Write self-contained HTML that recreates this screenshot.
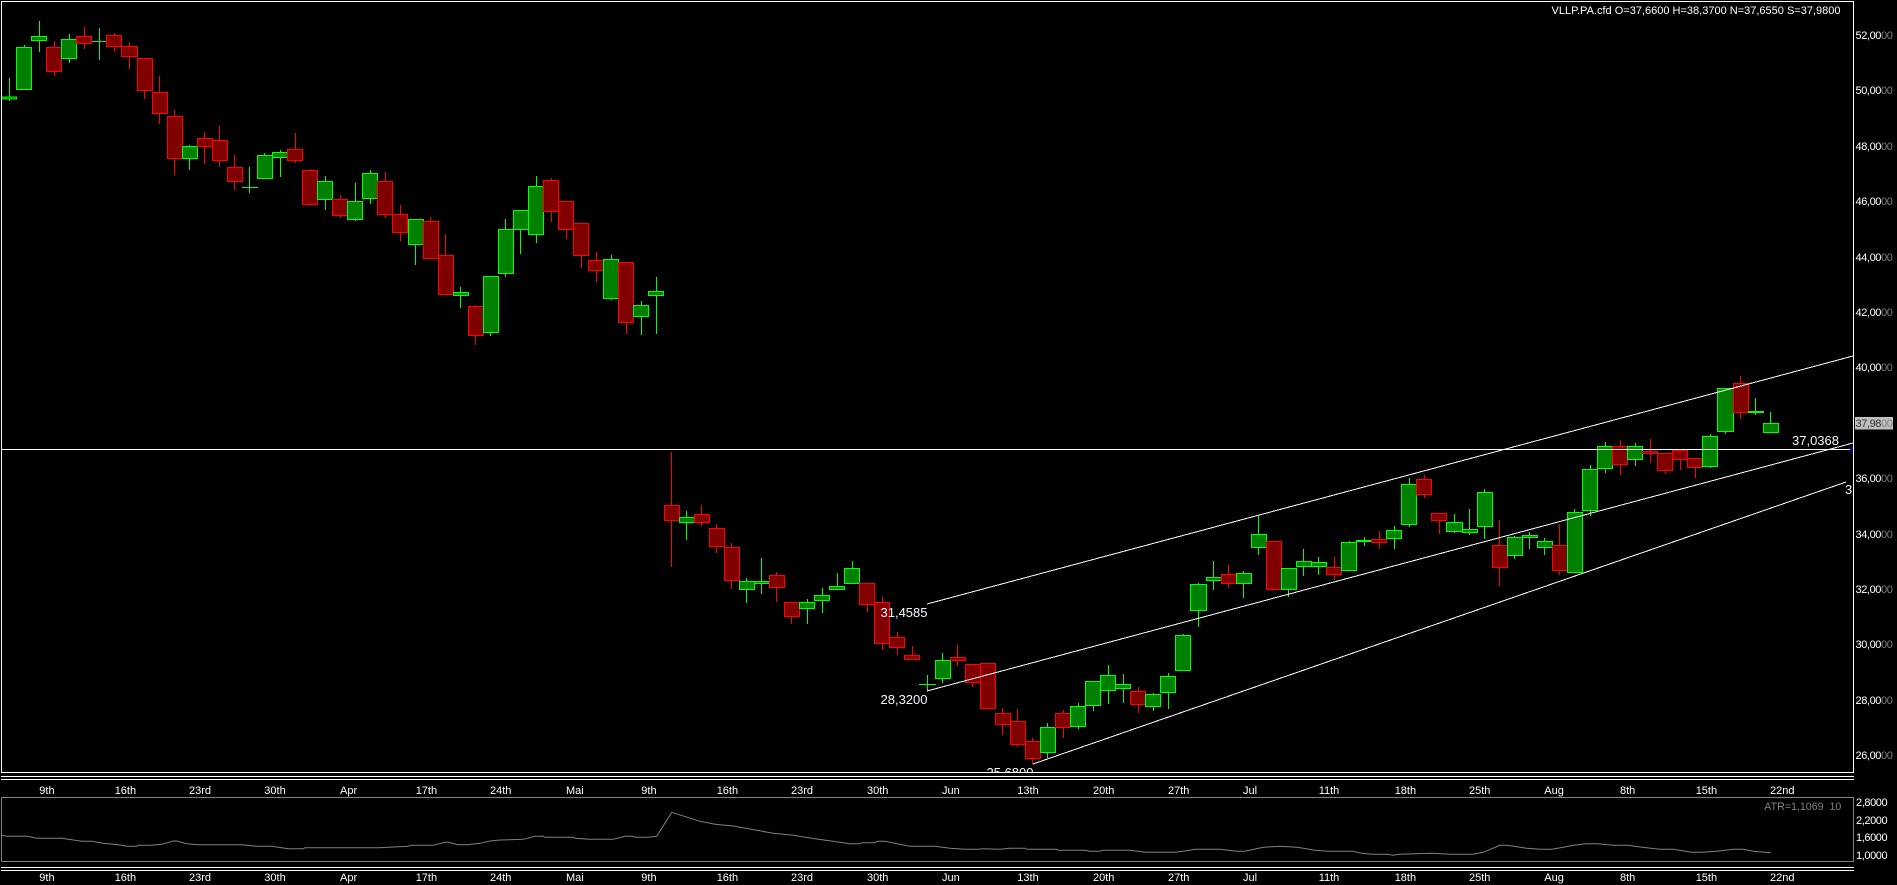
<!DOCTYPE html>
<html lang="fr"><head><meta charset="utf-8"><title>VLLP.PA.cfd</title>
<style>
html,body{margin:0;padding:0;background:#000;width:1897px;height:885px;overflow:hidden}
svg{display:block;position:absolute;left:0;top:0}
text{font-family:"Liberation Sans",sans-serif;font-size:11px;fill:#fff}
.g{fill:#008000;stroke:#0f0}
.r{fill:#800000;stroke:#f00}
.a{letter-spacing:-.4px}
.a tspan{fill:#808080}
.d{text-anchor:start}
.l{font-size:13px;fill:#f4f8ff}
</style></head><body>
<svg width="1897" height="885" viewBox="0 0 1897 885" xmlns="http://www.w3.org/2000/svg">
<defs><clipPath id="c"><rect x="2" y="2" width="1851" height="770"/></clipPath></defs>
<rect width="1897" height="885" fill="#000"/>
<g shape-rendering="crispEdges" fill="none">
<path stroke="#0f0" d="M9.5 78V101M24.5 45V89M39.5 21V52M69.5 34V63M99.5 28V60M91.5 41.5H106.5M189.5 145V170M249.5 167V193M242 187.5H258M264.5 153V178M280.5 150V177M325.5 176V210M355.5 183V221M370.5 170V204M415.5 219V265M460.5 287V308M490.5 276V336M505.5 219V277M520.5 210V254M536.5 176V243M611.5 255V300M641.5 301V335M656.5 277V334M686.5 511V540M746.5 578V603M761.5 558V594M807.5 599V624M822.5 588V613M837.5 573V590M852.5 561V584M927.5 675V691M919 684.5H936M942.5 653V683M1047.5 723V758M1078.5 703V729M1093.5 681V711M1108.5 665V704M1123.5 674V703M1153.5 693V711M1168.5 673V709M1183.5 634V671M1198.5 583V627M1213.5 561V590M1243.5 571V598M1258.5 516V555M1288.5 568V597M1303.5 549V576M1318.5 557V575M1349.5 541V571M1364.5 537V546M1394.5 526V549M1409.5 478V527M1454.5 514V533M1469.5 509V535M1484.5 489V539M1514.5 536V559M1529.5 532V549M1544.5 538V555M1574.5 509V573M1590.5 465V516M1605.5 442V473M1635.5 443V466M1710.5 434V468M1725.5 388V434M1755.5 398V415M1770.5 412V424"/>
<path stroke="#f00" d="M54.5 41V76M84.5 27V49M114.5 33V52M129.5 42V69M144.5 58V99M159.5 76V124M174.5 110V175M204.5 132V164M219.5 126V167M234.5 155V190M295.5 133V163M310.5 169V206M340.5 195V218M385.5 172V218M400.5 205V241M430.5 217V259M445.5 234V295M475.5 305V345M551.5 178V222M566.5 202V239M581.5 224V268M596.5 252V282M626.5 263V334M671.5 452V567M701.5 505V526M716.5 524V553M731.5 543V589M776.5 572V602M791.5 603V624M867.5 584V612M882.5 597V650M897.5 632V655M912.5 646V660M957.5 645V666M972.5 665V687M987.5 664V710M1002.5 708V735M1017.5 709V747M1032.5 738V764M1063.5 710V738M1138.5 687V713M1228.5 565V588M1273.5 542V591M1334.5 557V580M1379.5 531V549M1424.5 475V498M1439.5 514V534M1499.5 520V586M1559.5 524V575M1620.5 440V475M1650.5 439V463M1665.5 454V474M1680.5 451V470M1695.5 459V478M1740.5 376V419"/>
<path class="g" d="M1.5 97h15v2h-15z"/><path class="g" d="M16.5 47.500h15v42h-15z"/><path class="g" d="M31.5 36.500h15v4h-15z"/><path class="r" d="M46.500 47.500h15v24h-15z"/><path class="g" d="M61.500 39.500h15v19h-15z"/><path class="r" d="M76.500 36.500h15v7h-15z"/><path class="r" d="M106.500 35.500h15v11h-15z"/><path class="r" d="M121.500 46.500h16v10h-16z"/><path class="r" d="M137.500 58.500h15v32h-15z"/><path class="r" d="M152.500 92.500h15v21h-15z"/><path class="r" d="M167.500 116.500h15v42h-15z"/><path class="g" d="M182.500 146.500h15v12h-15z"/><path class="r" d="M197.500 138.500h15v8h-15z"/><path class="r" d="M212.500 140.500h15v20h-15z"/><path class="r" d="M227.500 167.500h15v14h-15z"/><path class="g" d="M257.500 155.500h15v23h-15z"/><path class="g" d="M272.500 152.500h15v5h-15z"/><path class="r" d="M287.500 149.500h15v11h-15z"/><path class="r" d="M302.500 170.500h15v34h-15z"/><path class="g" d="M317.500 181.500h15v18h-15z"/><path class="r" d="M332.500 199.500h15v16h-15z"/><path class="g" d="M347.500 201.500h15v18h-15z"/><path class="g" d="M362.500 173.500h15v25h-15z"/><path class="r" d="M377.500 181.500h15v33h-15z"/><path class="r" d="M392.500 214.500h15v18h-15z"/><path class="g" d="M408.500 219.500h15v25h-15z"/><path class="r" d="M423.500 221.500h15v37h-15z"/><path class="r" d="M438.500 255.500h15v39h-15z"/><path class="g" d="M453.500 292.500h15v3h-15z"/><path class="r" d="M468.500 306.500h15v29h-15z"/><path class="g" d="M483.500 276.500h15v56h-15z"/><path class="g" d="M498.500 229.500h15v44h-15z"/><path class="g" d="M513.500 210.500h15v19h-15z"/><path class="g" d="M528.500 186.500h15v48h-15z"/><path class="r" d="M543.500 180.500h15v31h-15z"/><path class="r" d="M558.500 201.500h15v28h-15z"/><path class="r" d="M573.500 223.500h15v32h-15z"/><path class="r" d="M588.500 260.500h15v10h-15z"/><path class="g" d="M603.500 259.500h15v39h-15z"/><path class="r" d="M618.500 262.500h15v60h-15z"/><path class="g" d="M633.500 305.500h15v11h-15z"/><path class="g" d="M648.500 291.500h15v4h-15z"/>
<path class="r" d="M664.500 505.500h15v15h-15z"/><path class="g" d="M679.500 517.500h15v5h-15z"/><path class="r" d="M694.500 514.500h15v8h-15z"/><path class="r" d="M709.500 528.500h15v18h-15z"/><path class="r" d="M724.500 547.500h15v33h-15z"/><path class="g" d="M739.500 581.500h15v8h-15z"/><path class="g" d="M754.500 581.500h15v2h-15z"/><path class="r" d="M769.500 575.500h15v12h-15z"/><path class="r" d="M784.500 602.500h15v14h-15z"/><path class="g" d="M799.500 602.500h15v6h-15z"/><path class="g" d="M814.500 595.500h15v5h-15z"/><path class="g" d="M829.500 586.500h15v3h-15z"/><path class="g" d="M844.500 568.500h15v15h-15z"/><path class="r" d="M859.500 583.500h15v21h-15z"/><path class="r" d="M874.500 602.500h15v41h-15z"/><path class="r" d="M889.500 637.500h15v10h-15z"/><path class="r" d="M904.500 655.500h15v4h-15z"/><path class="g" d="M935.500 660.500h15v18h-15z"/><path class="r" d="M950.500 657.500h15v3h-15z"/><path class="r" d="M965.500 664.500h15v18h-15z"/><path class="r" d="M980.500 663.500h15v45h-15z"/><path class="r" d="M995.500 713.500h15v11h-15z"/><path class="r" d="M1010.500 721.500h15v23h-15z"/><path class="r" d="M1025.500 741.500h15v17h-15z"/><path class="g" d="M1040.500 727.500h15v25h-15z"/><path class="r" d="M1055.500 713.500h15v14h-15z"/><path class="g" d="M1070.500 706.500h15v20h-15z"/><path class="g" d="M1085.500 681.500h15v24h-15z"/><path class="g" d="M1100.500 675.500h15v15h-15z"/><path class="g" d="M1115.500 684.500h15v4h-15z"/><path class="r" d="M1130.500 691.500h15v13h-15z"/><path class="g" d="M1145.500 694.500h15v12h-15z"/><path class="g" d="M1160.500 676.500h15v16h-15z"/><path class="g" d="M1175.500 635.500h15v35h-15z"/><path class="g" d="M1190.500 584.500h16v26h-16z"/><path class="g" d="M1206.500 577.500h15v3h-15z"/><path class="r" d="M1221.500 574.500h15v9h-15z"/><path class="g" d="M1236.500 573.500h15v10h-15z"/><path class="g" d="M1251.500 534.500h15v13h-15z"/><path class="r" d="M1266.500 541.500h15v48h-15z"/><path class="g" d="M1281.500 568.500h15v21h-15z"/><path class="g" d="M1296.500 561.500h15v5h-15z"/><path class="g" d="M1311.500 562.500h15v4h-15z"/><path class="r" d="M1326.500 567.500h15v7h-15z"/><path class="g" d="M1341.500 542.500h15v28h-15z"/><path class="g" d="M1356.500 540.500h15v1h-15z"/><path class="r" d="M1371.500 539.500h15v3h-15z"/><path class="g" d="M1386.500 530.500h15v8h-15z"/><path class="g" d="M1401.500 484.500h15v40h-15z"/><path class="r" d="M1416.500 479.500h15v15h-15z"/><path class="r" d="M1431.500 513.500h15v7h-15z"/><path class="g" d="M1446.500 522.500h16v9h-16z"/><path class="g" d="M1462.500 529.500h15v3h-15z"/><path class="g" d="M1477.500 492.500h15v34h-15z"/><path class="r" d="M1492.500 545.500h15v22h-15z"/><path class="g" d="M1507.500 537.500h15v18h-15z"/><path class="g" d="M1522.500 535.500h15v2h-15z"/><path class="g" d="M1537.500 541.500h15v6h-15z"/><path class="r" d="M1552.500 545.500h15v25h-15z"/><path class="g" d="M1567.500 512.500h15v60h-15z"/><path class="g" d="M1582.500 469.500h15v41h-15z"/><path class="g" d="M1597.500 446.500h15v22h-15z"/><path class="r" d="M1612.500 446.500h15v18h-15z"/><path class="g" d="M1627.500 446.500h15v13h-15z"/><path class="r" d="M1642.500 451.500h15v2h-15z"/><path class="r" d="M1657.500 453.500h15v17h-15z"/><path class="r" d="M1672.500 450.500h15v9h-15z"/><path class="r" d="M1687.500 458.500h15v9h-15z"/><path class="g" d="M1702.500 436.500h15v30h-15z"/><path class="g" d="M1717.500 388.500h16v43h-16z"/><path class="r" d="M1733.500 383.500h15v29h-15z"/><path stroke="#0f0" d="M1748 411.500H1764M1748 412.500H1764"/><path class="g" d="M1763.500 423.500h15v9h-15z"/>
<path stroke="#fff" d="M927 604L1853 356M927 691L1853 443M1033 764L1846 482M2 449.500H1853"/>
<rect x="1850" y="447" width="3" height="5" fill="#000080"/>
<rect x="1.500" y="1.500" width="1852" height="771" stroke="#fff"/>
<path stroke="#fff" d="M1 776.500H1854M1 779.500H1854M1 867.500H1854M1 870.500H1854"/>
<rect x="1.500" y="797.500" width="1852" height="64" stroke="#808080"/>
</g>
<path fill="none" stroke="#808080" stroke-width="1" d="M1.700 835.300L6.700 836.300L27.300 836.300L36.700 838.300L61.700 838.300L73.300 840L81.700 841.300L91.700 841.300L103.300 843.300L118.300 844.700L126.700 846.300L136.700 846.300L138.300 845.300L151.700 845.300L161.700 844.300L173.300 841L176.700 841L186.700 843.700L198.300 844.700L241.700 844.700L256.700 846.300L271.700 846.300L288.300 848.700L303.300 848.700L305 847.700L378.300 847.700L408.300 846.300L410 845.300L433.300 845.300L445 842.300L448.300 842.300L458.300 844.700L466.700 844.700L480 843.300L490 841L500 840L523.300 839.300L535 836.300L543.300 836.300L545 837.300L573.300 837.300L575 838.300L590 839.300L613.300 839.300L625 836.300L633.300 836.300L635 837.300L648.300 837.300L656.700 836.300L671.700 812.300L700 821.300L715 824.300L733.300 826L773.300 833.300L793.300 835.300L811.700 838.300L843.300 842.700L850 843.700L860 843.700L861.700 842.700L875 842.700L876.700 841.300L885 841.300L910 846.300L935 846.300L950 848.300L965 849.300L980 849.300L981.700 848.700L1000 849.300L1010 848.300L1025 848.300L1026.700 849.300L1056.700 849.300L1058.300 850.300L1085 850.300L1090 851.300L1100 851.300L1101.700 850.300L1130 850.300L1146.700 852.300L1175 852.300L1186.700 850.700L1195 849.300L1220 849.300L1236.700 851.300L1245 851.300L1263.300 847.300L1280 846.300L1296.700 847.300L1303.300 848.300L1315 850.300L1328.300 851.300L1353.300 851.300L1361.700 853.300L1371.700 854.300L1386.700 854.300L1393.300 855.300L1398.300 854.300L1431.700 853.300L1450 854.300L1473.300 854.300L1483.300 852.300L1500 845.300L1506.700 845.300L1516.700 846.700L1526.700 848.300L1540 849.300L1551.700 849.300L1563.300 847.300L1573.300 845.300L1586.700 843.700L1596.700 843.700L1613.300 845.300L1628.300 845.300L1638.300 846.700L1660 849.300L1673.300 849.300L1691.700 852.300L1701.700 852.300L1716.700 851.300L1733.300 849.300L1743.300 849.300L1753.300 851.300L1770.700 852.700"/>

<text x="1551.500" y="14" textLength="289" lengthAdjust="spacingAndGlyphs">VLLP.PA.cfd O=37,6600 H=38,3700 N=37,6550 S=37,9800</text>
<g clip-path="url(#c)">
<text class="l" x="880.500" y="617">31,4585</text>
<text class="l" x="880.500" y="704">28,3200</text>
<text class="l" x="986.500" y="777">25,6800</text>
<text class="l" x="1792" y="445">37,0368</text>
<text class="l" x="1845" y="494">3</text>
</g>

<rect x="1855" y="417" width="38" height="12.500" fill="#c0c0c0"/>
<g class="a">
<text class="a" x="1855.500" y="39">52,00<tspan>00</tspan></text>
<text class="a" x="1855.500" y="94">50,00<tspan>00</tspan></text>
<text class="a" x="1855.500" y="150">48,00<tspan>00</tspan></text>
<text class="a" x="1855.500" y="205">46,00<tspan>00</tspan></text>
<text class="a" x="1855.500" y="261">44,00<tspan>00</tspan></text>
<text class="a" x="1855.500" y="316">42,00<tspan>00</tspan></text>
<text class="a" x="1855.500" y="371">40,00<tspan>00</tspan></text>
<text class="a" x="1855.500" y="427" style="fill:#303030">37,98<tspan>00</tspan></text>
<text class="a" x="1855.500" y="482">36,00<tspan>00</tspan></text>
<text class="a" x="1855.500" y="538">34,00<tspan>00</tspan></text>
<text class="a" x="1855.500" y="593">32,00<tspan>00</tspan></text>
<text class="a" x="1855.500" y="648">30,00<tspan>00</tspan></text>
<text class="a" x="1855.500" y="704">28,00<tspan>00</tspan></text>
<text class="a" x="1855.500" y="759">26,00<tspan>00</tspan></text>
</g>
<text class="a" x="1856" y="806">2,8000</text>
<text class="a" x="1856" y="824">2,2000</text>
<text class="a" x="1856" y="841">1,6000</text>
<text class="a" x="1856" y="859">1,0000</text>
<text x="1764.300" y="810" style="fill:#808080;white-space:pre" textLength="77" lengthAdjust="spacingAndGlyphs" xml:space="preserve">ATR=1,1069  10</text>

<g>
<text x="39.300" y="794">9th</text><text x="114.700" y="794">16th</text><text x="189" y="794">23rd</text><text x="264.300" y="794">30th</text><text x="340" y="794">Apr</text><text x="415.700" y="794">17th</text><text x="490" y="794">24th</text><text x="566" y="794">Mai</text><text x="641.300" y="794">9th</text><text x="716.700" y="794">16th</text><text x="791" y="794">23rd</text><text x="867" y="794">30th</text><text x="942" y="794">Jun</text><text x="1017.300" y="794">13th</text><text x="1093" y="794">20th</text><text x="1168" y="794">27th</text><text x="1243" y="794">Jul</text><text x="1318.700" y="794">11th</text><text x="1394.700" y="794">18th</text><text x="1469" y="794">25th</text><text x="1544.300" y="794">Aug</text><text x="1620" y="794">8th</text><text x="1695.700" y="794">15th</text><text x="1770" y="794">22nd</text>
<text x="39.300" y="881">9th</text><text x="114.700" y="881">16th</text><text x="189" y="881">23rd</text><text x="264.300" y="881">30th</text><text x="340" y="881">Apr</text><text x="415.700" y="881">17th</text><text x="490" y="881">24th</text><text x="566" y="881">Mai</text><text x="641.300" y="881">9th</text><text x="716.700" y="881">16th</text><text x="791" y="881">23rd</text><text x="867" y="881">30th</text><text x="942" y="881">Jun</text><text x="1017.300" y="881">13th</text><text x="1093" y="881">20th</text><text x="1168" y="881">27th</text><text x="1243" y="881">Jul</text><text x="1318.700" y="881">11th</text><text x="1394.700" y="881">18th</text><text x="1469" y="881">25th</text><text x="1544.300" y="881">Aug</text><text x="1620" y="881">8th</text><text x="1695.700" y="881">15th</text><text x="1770" y="881">22nd</text>
</g>
</svg>
</body></html>
